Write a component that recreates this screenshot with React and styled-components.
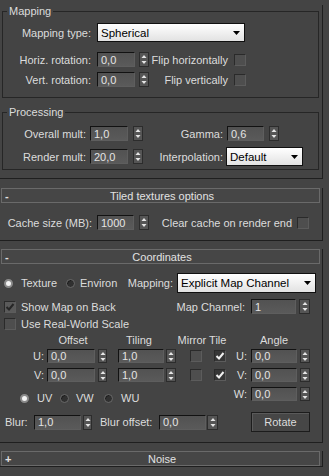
import React from 'react';
import styled, { createGlobalStyle } from 'styled-components';

const Global = createGlobalStyle`
  html, body { margin: 0; padding: 0; background: #444444; }
  body { font-family: "Liberation Sans", Arial, sans-serif; font-size: 11px; color: #dcdcdc; }
`;

const Page = styled.div`
  width: 329px;
  height: 476px;
  overflow: hidden;
  background: #444444;
  font-family: "Liberation Sans", Arial, sans-serif;
  font-size: 11px;
  color: #dcdcdc;
  line-height: 12px;
`;

const TopFrame = styled.div`
  width: 323px;
  box-sizing: border-box;
  border-right: 1px solid #1f1f1f;
  border-bottom: 1px solid #1f1f1f;
  padding-bottom: 8px;
`;

const Frame = styled.div`
  width: 323px;
  box-sizing: border-box;
  margin-top: ${p => p.mt}px;
  border-right: 1px solid #1f1f1f;
  border-bottom: 1px solid #1f1f1f;
  padding-bottom: ${p => p.pb}px;
`;

const Header = styled.div`
  height: 15px;
  width: 319px;
  margin-left: 1px;
  box-sizing: border-box;
  border: 1px solid #6a6a6a;
  background: #464646;
  display: flex;
  align-items: center;
  color: #e2e2e2;
`;

const HeaderSign = styled.span`
  width: 12px;
  padding-left: 3px;
  font-weight: bold;
  flex: none;
`;

const HeaderTitle = styled.span`
  flex: 1;
  text-align: center;
  padding-right: 12px;
`;

const Group = styled.fieldset`
  margin: ${p => p.mt}px 0 0 2px;
  padding: 0 0 ${p => p.pb}px 0;
  width: 317px;
  box-sizing: border-box;
  border: 1px solid #262626;
  min-width: 0;
`;

const Legend = styled.legend`
  margin-left: 4px;
  padding: 0 2px;
  line-height: 12px;
  font-size: 11px;
  color: #dcdcdc;
`;

const Row = styled.div`
  display: flex;
  align-items: center;
  height: ${p => p.h}px;
  margin-top: ${p => p.mt || 0}px;
`;

const Label = styled.span`
  flex: none;
  width: ${p => p.w}px;
  margin-left: ${p => p.ml || 0}px;
  text-align: ${p => p.align || 'right'};
  white-space: nowrap;
`;

const FieldBox = styled.div`
  flex: none;
  width: ${p => p.w}px;
  height: ${p => p.h || 15}px;
  margin-left: ${p => p.ml || 0}px;
  box-sizing: border-box;
  background: linear-gradient(#525252, #5a5a5a);
  border-top: 1px solid #121212;
  border-left: 1px solid #121212;
  border-bottom: 1px solid #5e5e5e;
  border-right: 1px solid #5e5e5e;
  padding-left: 3px;
  display: flex;
  align-items: center;
  color: #e4e4e4;
  white-space: nowrap;
`;

const SpinBox = styled.div`
  flex: none;
  width: ${p => p.w || 10}px;
  height: ${p => p.h || 15}px;
  margin-left: ${p => p.ml || 0}px;
  box-sizing: border-box;
  background: #555555;
  border: 1px solid #2c2c2c;
  display: flex;
  align-items: center;
  justify-content: center;
`;

const Drop = styled.div`
  flex: none;
  width: ${p => p.w}px;
  height: ${p => p.h || 19}px;
  margin-left: ${p => p.ml || 0}px;
  box-sizing: border-box;
  background: linear-gradient(#ffffff, #e2e2e2);
  border: 1px solid #101010;
  color: #000;
  display: flex;
  align-items: center;
  justify-content: space-between;
  padding: 0 4px 0 3px;
  font-size: 11.5px;
`;

const Check = styled.div`
  flex: none;
  width: 12px;
  height: 12px;
  margin-left: ${p => p.ml || 0}px;
  box-sizing: border-box;
  background: ${p => p.bg || '#4e4e4e'};
  border-top: 1px solid #2a2a2a;
  border-left: 1px solid #2a2a2a;
  border-bottom: 1px solid #5c5c5c;
  border-right: 1px solid #5c5c5c;
  display: flex;
  align-items: center;
  justify-content: center;
`;

const Radio = styled.div`
  flex: none;
  width: 9px;
  height: 9px;
  margin-left: ${p => p.ml || 0}px;
  border-radius: 50%;
  box-sizing: border-box;
  background: ${p => (p.on ? '#f4f4f4' : '#303030')};
  border: ${p => (p.on ? '2px solid #8a8a8a' : '1px solid #6a6a6a')};
  box-shadow: ${p => (p.on ? 'none' : 'inset 1px 1px 0 #1e1e1e')};
`;

const Button = styled.div`
  flex: none;
  width: ${p => p.w}px;
  height: 20px;
  margin-left: ${p => p.ml || 0}px;
  box-sizing: border-box;
  border: 1px solid #1c1c1c;
  background: #464646;
  box-shadow: inset 1px 1px 0 #5a5a5a;
  display: flex;
  align-items: center;
  justify-content: center;
  color: #dcdcdc;
`;

const Columns = styled.div`
  display: flex;
  margin-top: ${p => p.mt || 0}px;
`;

const Col = styled.div`
  flex: none;
  width: ${p => p.w}px;
  display: flex;
  flex-direction: column;
`;

const Arrows = () => (
  <svg width="6" height="11" viewBox="0 0 6 11">
    <path d="M3 1 L5.5 4 L0.5 4 Z" fill="#e6e6e6" />
    <path d="M3 10 L5.5 7 L0.5 7 Z" fill="#e6e6e6" />
  </svg>
);

const Spinner = ({ w, ml, h }) => (
  <SpinBox w={w} ml={ml} h={h}>
    <Arrows />
  </SpinBox>
);

const DropArrow = () => (
  <svg width="7" height="4" viewBox="0 0 7 4">
    <path d="M0 0 H7 L3.5 4 Z" fill="#000" />
  </svg>
);

const Tick = ({ color }) => (
  <svg width="10" height="10" viewBox="0 0 10 10">
    <path d="M1.5 5 L4 7.5 L8.5 2" stroke={color} strokeWidth="2" fill="none" />
  </svg>
);

const Num = ({ w, ml, h, value, spinMl, spinW }) => (
  <>
    <FieldBox w={w} ml={ml} h={h}>{value}</FieldBox>
    <Spinner ml={spinMl} w={spinW} h={h} />
  </>
);

export default function App() {
  return (
    <Page>
      <Global />
      <TopFrame>
        <Group mt={5} pb={10}>
          <Legend>Mapping</Legend>
          <Row h={19} mt={6}>
            <Label w={88}>Mapping type:</Label>
            <Drop w={148} ml={6}>
              <span>Spherical</span>
              <DropArrow />
            </Drop>
          </Row>
          <Row h={15} mt={10}>
            <Label w={88}>Horiz. rotation:</Label>
            <Num w={38} ml={6} value="0,0" spinMl={4} spinW={10} />
            <Label w={79}>Flip horizontally</Label>
            <Check ml={6} />
          </Row>
          <Row h={15} mt={5}>
            <Label w={88}>Vert. rotation:</Label>
            <Num w={38} ml={6} value="0,0" spinMl={4} spinW={10} />
            <Label w={79}>Flip vertically</Label>
            <Check ml={6} />
          </Row>
        </Group>
        <Group mt={8} pb={3}>
          <Legend>Processing</Legend>
          <Row h={19} mt={6}>
            <Label w={83}>Overall mult:</Label>
            <Num w={38} ml={4} value="1,0" spinMl={5} spinW={10} />
            <Label w={80}>Gamma:</Label>
            <Num w={37} ml={4} value="0,6" spinMl={5} spinW={10} />
          </Row>
          <Row h={19} mt={4}>
            <Label w={83}>Render mult:</Label>
            <Num w={38} ml={4} value="20,0" spinMl={5} spinW={10} />
            <Label w={80}>Interpolation:</Label>
            <Drop w={77} ml={3}>
              <span>Default</span>
              <DropArrow />
            </Drop>
          </Row>
        </Group>
      </TopFrame>

      <Frame mt={9} pb={10}>
        <Header>
          <HeaderSign>-</HeaderSign>
          <HeaderTitle>Tiled textures options</HeaderTitle>
        </Header>
        <Row h={15} mt={12}>
          <Label w={92}>Cache size (MB):</Label>
          <Num w={37} ml={5} value="1000" spinMl={5} spinW={10} />
          <Label w={143}>Clear cache on render end</Label>
          <Check ml={5} />
        </Row>
      </Frame>

      <Frame mt={8} pb={10}>
        <Header>
          <HeaderSign>-</HeaderSign>
          <HeaderTitle>Coordinates</HeaderTitle>
        </Header>
        <Row h={20} mt={9}>
          <Radio ml={4} on />
          <Label w={36} ml={8} align="left">Texture</Label>
          <Radio ml={9} />
          <Label w={37} ml={5} align="left">Environ</Label>
          <Label w={56}>Mapping:</Label>
          <Drop w={139} ml={4} h={20}>
            <span>Explicit Map Channel</span>
            <DropArrow />
          </Drop>
        </Row>
        <Row h={15} mt={6}>
          <Check ml={4} bg="#5a5a5a">
            <Tick color="#262626" />
          </Check>
          <Label w={88} ml={5} align="left">Show Map on Back</Label>
          <Label w={136}>Map Channel:</Label>
          <Num w={45} ml={6} value="1" spinMl={3} spinW={11} />
        </Row>
        <Row h={13} mt={3}>
          <Check ml={4} />
          <Label w={110} ml={5} align="left">Use Real-World Scale</Label>
        </Row>
        <Columns mt={4}>
          <Col w={229}>
            <Row h={12}>
              <Label w={52} ml={47} align="center">Offset</Label>
              <Label w={42} ml={19} align="center">Tiling</Label>
              <Label w={56} ml={14} align="center">Mirror Tile</Label>
            </Row>
            <Row h={14} mt={3}>
              <Label w={44}>U:</Label>
              <Num w={48} ml={3} h={14} value="0,0" spinMl={3} spinW={9} />
              <Num w={46} ml={11} h={14} value="1,0" spinMl={2} spinW={10} />
              <Check ml={14} />
              <Check ml={12} bg="#363636">
                <Tick color="#f0f0f0" />
              </Check>
            </Row>
            <Row h={14} mt={5}>
              <Label w={44}>V:</Label>
              <Num w={48} ml={3} h={14} value="0,0" spinMl={3} spinW={9} />
              <Num w={46} ml={11} h={14} value="1,0" spinMl={2} spinW={10} />
              <Check ml={14} />
              <Check ml={12} bg="#363636">
                <Tick color="#f0f0f0" />
              </Check>
            </Row>
            <Row h={12} mt={10}>
              <Radio ml={20} on />
              <Label w={14} ml={8} align="left">UV</Label>
              <Radio ml={9} />
              <Label w={16} ml={7} align="left">VW</Label>
              <Radio ml={12} />
              <Label w={16} ml={8} align="left">WU</Label>
            </Row>
          </Col>
          <Col w={90}>
            <Row h={12}>
              <Label w={46} ml={22} align="center">Angle</Label>
            </Row>
            <Row h={14} mt={3}>
              <Label w={18}>U:</Label>
              <Num w={46} ml={4} h={14} value="0,0" spinMl={3} spinW={10} />
            </Row>
            <Row h={14} mt={5}>
              <Label w={18}>V:</Label>
              <Num w={46} ml={4} h={14} value="0,0" spinMl={3} spinW={10} />
            </Row>
            <Row h={14} mt={5}>
              <Label w={18}>W:</Label>
              <Num w={46} ml={4} h={14} value="0,0" spinMl={3} spinW={10} />
            </Row>
          </Col>
        </Columns>
        <Row h={20} mt={8}>
          <Label w={22} ml={5} align="left">Blur:</Label>
          <Num w={47} ml={7} value="1,0" spinMl={2} spinW={9} />
          <Label w={57} ml={8} align="left">Blur offset:</Label>
          <Num w={47} ml={2} value="0,0" spinMl={1} spinW={11} />
          <Button w={59} ml={33}>Rotate</Button>
        </Row>
      </Frame>

      <Frame mt={8} pb={0}>
        <Header>
          <HeaderSign>+</HeaderSign>
          <HeaderTitle>Noise</HeaderTitle>
        </Header>
      </Frame>
    </Page>
  );
}
